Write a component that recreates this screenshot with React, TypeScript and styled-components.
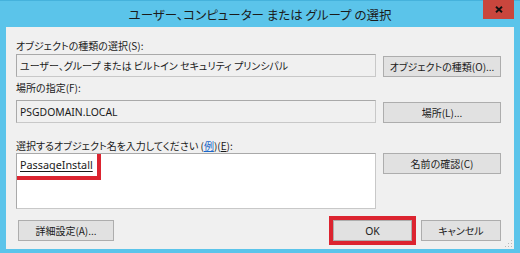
import React from "react";
import styled, { createGlobalStyle } from "styled-components";

const Global = createGlobalStyle`
  html, body { margin: 0; padding: 0; background: #5bc4ea; }
  * { box-sizing: border-box; }
`;

const JP = `"Noto Sans CJK JP", "Noto Sans", sans-serif`;
const LAT = `"Noto Sans", "Noto Sans CJK JP", sans-serif`;

const Window = styled.div`
  width: 520px;
  height: 253px;
  background: #5bc4ea;
  border-top: 1px solid #45b2dc;
  display: flex;
  flex-direction: column;
  font-family: ${JP};
  font-feature-settings: "palt";
  color: #1a1a1a;
`;

const TitleBar = styled.div`
  position: relative;
  height: 26px;
  display: flex;
  align-items: center;
  justify-content: center;
`;

const Title = styled.div`
  font-size: 12.5px;
  color: #1b1b1b;
  padding-top: 1px;
`;

const Close = styled.div`
  position: absolute;
  top: -1px;
  right: 6px;
  width: 31px;
  height: 19px;
  background: #c9463d;
  display: flex;
  align-items: center;
  justify-content: center;
`;

const Panel = styled.div`
  position: relative;
  flex: 1;
  margin: 0 6px 4px 6px;
  background: #f0f0f0;
  padding: 12px 13px 0 10px;
  display: flex;
  flex-direction: column;
`;

const Label = styled.div<{ $mt: number }>`
  margin-top: ${(p) => p.$mt}px;
  height: 14px;
  line-height: 14px;
  font-size: 10px;
  white-space: nowrap;
`;

const Row = styled.div<{ $align: string; $mt: number }>`
  margin-top: ${(p) => p.$mt}px;
  display: grid;
  grid-template-columns: 360px 118px;
  column-gap: 7px;
  align-items: ${(p) => p.$align};
`;

const Field = styled.div<{ $h: number; $white?: boolean }>`
  height: ${(p) => p.$h}px;
  background: ${(p) => (p.$white ? "#ffffff" : "#f0f0f0")};
  border: 1px solid #a9a9a9;
  border-bottom-color: #c8c8c8;
  border-right-color: #c8c8c8;
  padding: ${(p) => (p.$white ? "0" : "0 3px")};
  font-size: 10px;
  line-height: ${(p) => (p.$white ? "normal" : `${p.$h - 2}px`)};
  white-space: nowrap;
  overflow: hidden;
`;

const Latin = styled.span`
  font-family: ${LAT};
  font-size: 10.4px;
`;

const Resolved = styled.span`
  display: inline-block;
  font-family: ${LAT};
  font-size: 10.8px;
  line-height: 22px;
  padding: 0 4px 0 3px;
  text-decoration: underline;
  text-underline-offset: 2px;
  outline: 4px solid #dc2430;
`;

const Button = styled.div<{ $w?: number; $hl?: boolean }>`
  width: ${(p) => (p.$w ? `${p.$w}px` : "auto")};
  height: 21px;
  background: #e1e1e1;
  border: 1px solid #adadad;
  display: flex;
  align-items: center;
  justify-content: center;
  font-size: 10px;
  white-space: nowrap;
  color: #1a1a1a;
  outline: ${(p) => (p.$hl ? "4px solid #dc2430" : "none")};
`;

const Footer = styled.div`
  margin-top: 11px;
  display: flex;
  align-items: center;
  padding-left: 2px;
`;

const Spacer = styled.div`
  flex: 1;
`;

const RightGroup = styled.div`
  display: flex;
  gap: 9px;
`;

const Link = styled.span`
  color: #1a66c8;
  text-decoration: underline;
`;

const U = styled.span`
  text-decoration: underline;
`;

const Grip = styled.svg`
  position: absolute;
  right: 1px;
  bottom: 1px;
`;

export default function App() {
  return (
    <>
      <Global />
      <Window>
        <TitleBar>
          <Title>ユーザー、コンピューター または グループ の選択</Title>
          <Close>
            <svg width="8" height="7" viewBox="0 0 8 7">
              <path d="M1 0.8 L7 6.2 M7 0.8 L1 6.2" stroke="#111" strokeWidth="1.9" />
            </svg>
          </Close>
        </TitleBar>
        <Panel>
          <Label $mt={0}>オブジェクトの種類の選択(S):</Label>
          <Row $align="end" $mt={1}>
            <Field $h={23}>ユーザー、グループ または ビルトイン セキュリティ プリンシパル</Field>
            <Button>オブジェクトの種類(O)...</Button>
          </Row>
          <Label $mt={4}>場所の指定(F):</Label>
          <Row $align="end" $mt={5}>
            <Field $h={23}>
              <Latin>PSGDOMAIN.LOCAL</Latin>
            </Field>
            <Button>場所(L)...</Button>
          </Row>
          <Label $mt={16}>
            選択するオブジェクト名を入力してください (<Link>例</Link>)(<U>E</U>):
          </Label>
          <Row $align="start" $mt={0}>
            <Field $h={56} $white>
              <Resolved>PassageInstall</Resolved>
            </Field>
            <Button>名前の確認(C)</Button>
          </Row>
          <Footer>
            <Button $w={96}>詳細設定(A)...</Button>
            <Spacer />
            <RightGroup>
              <Button $w={79} $hl>
                <Latin>OK</Latin>
              </Button>
              <Button $w={80}>キャンセル</Button>
            </RightGroup>
          </Footer>
          <Grip width="8" height="8" viewBox="0 0 8 8">
            <rect x="6" y="0" width="1" height="1" fill="#b8b8b8" />
            <rect x="6" y="3" width="1" height="1" fill="#b8b8b8" />
            <rect x="3" y="3" width="1" height="1" fill="#b8b8b8" />
            <rect x="6" y="6" width="1" height="1" fill="#b8b8b8" />
            <rect x="3" y="6" width="1" height="1" fill="#b8b8b8" />
            <rect x="0" y="6" width="1" height="1" fill="#b8b8b8" />
          </Grip>
        </Panel>
      </Window>
    </>
  );
}
